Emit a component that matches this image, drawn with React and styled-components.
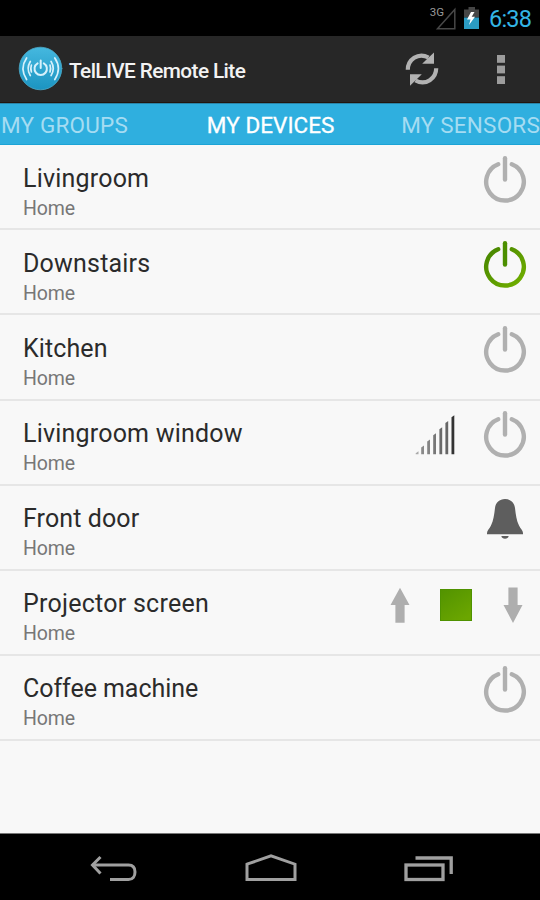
import React from 'react';
import styled, { createGlobalStyle } from 'styled-components';

const GlobalStyle = createGlobalStyle`
  * {
    box-sizing: border-box;
  }

  body {
    margin: 0;
    background: #000;
    font-family: Roboto, 'Liberation Sans', sans-serif;
  }

  svg {
    display: block;
    flex: none;
  }
`;

const Screen = styled.div`
  width: 540px;
  height: 900px;
  display: flex;
  flex-direction: column;
  overflow: hidden;
  background: #f8f8f8;
`;

const StatusBar = styled.div`
  height: 36px;
  flex: none;
  display: flex;
  justify-content: flex-end;
  align-items: center;
  padding-right: 8px;
  background: #000;
`;

const Clock = styled.span`
  width: 43px;
  margin-left: 9px;
  padding-top: 2px;
  color: #33b5e5;
  font-size: 23.5px;
  line-height: 34px;
  letter-spacing: -0.8px;
  white-space: nowrap;
`;

const ActionBar = styled.header`
  height: 67px;
  flex: none;
  display: flex;
  align-items: center;
  padding: 0 0 1px 18px;
  background: #272727;
  border-bottom: 1px solid #21160f;
`;

const Title = styled.h1`
  flex: 1;
  margin: 4px 0 0 6px;
  color: #f3f3f3;
  font-size: 20.8px;
  font-weight: 500;
  letter-spacing: -0.6px;
  white-space: nowrap;
`;

const IconButton = styled.button`
  width: ${({ $width }) => $width}px;
  height: 64px;
  padding: 0;
  display: flex;
  align-items: center;
  justify-content: center;
  background: none;
  border: 0;
`;

const Tabs = styled.nav`
  height: 42px;
  flex: none;
  display: flex;
  justify-content: space-between;
  align-items: center;
  padding: 1px 0 0 1px;
  background: #2fafdf;
  border-top: 1px solid #2a84a8;
  border-bottom: 1px solid #1ca4d6;
`;

const Tab = styled.span`
  padding-left: ${({ $active }) => ($active ? 12 : 0)}px;
  color: ${({ $active }) => ($active ? '#fff' : '#a5dcf2')};
  font-size: 22.5px;
  line-height: 38px;
  letter-spacing: ${({ $active }) => ($active ? 0.05 : 0.2)}px;
  -webkit-text-stroke: ${({ $active }) => ($active ? '0.3px #fff' : '0')};
  white-space: nowrap;
`;

const DeviceList = styled.ul`
  flex: 1;
  margin: 0;
  padding: 0.4px 0 0;
  list-style: none;
`;

const DeviceRow = styled.li`
  height: 85.05px;
  display: flex;
  justify-content: space-between;
  border-bottom: 2px solid #e6e6e6;
`;

const DeviceInfo = styled.div`
  padding: 17.4px 0 0 23px;
`;

const DeviceName = styled.div`
  color: #2b2b2b;
  font-size: 25px;
  line-height: 32px;
  letter-spacing: ${({ $spacing }) => $spacing}px;
  white-space: nowrap;
`;

const DeviceLocation = styled.div`
  color: #777;
  font-size: 19.5px;
  line-height: 28px;
  letter-spacing: -0.1px;
`;

const Actions = styled.div`
  display: flex;
  padding-top: 10px;
`;

const Slot = styled.div`
  width: ${({ $width }) => $width}px;
  height: 49px;
  display: flex;
  align-items: center;
  justify-content: center;
  padding: 0 0 ${({ $raise = 0 }) => $raise}px ${({ $shift = 0 }) => $shift}px;
`;

const NavBar = styled.footer`
  height: 67px;
  flex: none;
  display: flex;
  align-items: center;
  justify-content: center;
  gap: 107px;
  padding: 1px 0 0 3px;
  background: #000;
  border-top: 1px solid #777;
`;

const PowerIcon = ({ on }) => (
  <svg width="44" height="48" viewBox="0 0 44 48" fill="none">
    <defs>
      <linearGradient id="powerOn" x1="0" y1="0" x2="1" y2="1">
        <stop offset="0" stopColor="#468500" />
        <stop offset="1" stopColor="#72b000" />
      </linearGradient>
    </defs>
    <path
      d="M15.2 9.2A18.8 18.8 0 1 0 28.8 9.2"
      stroke={on ? 'url(#powerOn)' : '#b0b0b0'}
      strokeWidth="4.4"
      strokeLinecap="round"
    />
    <path d="M22 3.2V24.6" stroke={on ? '#4c8f00' : '#b0b0b0'} strokeWidth="4.4" strokeLinecap="round" />
  </svg>
);

const DimmerIcon = () => (
  <svg width="40" height="40" viewBox="0 0 40 40">
    {[
      [0.7, 36.8, '#aaa'],
      [6.2, 31, '#8a8a8a'],
      [12.2, 25, '#858585'],
      [18.2, 18.8, '#777'],
      [24.4, 12.7, '#6a6a6a'],
      [30.4, 6.5, '#666'],
      [36.5, 0.7, '#333'],
    ].map(([x, y, fill]) => (
      <path key={x} d={`M${x} ${y + 1.5}l2.8 -2V39.2h-2.8z`} fill={fill} />
    ))}
  </svg>
);

const BellIcon = () => (
  <svg width="38" height="40" viewBox="0 0 38 40" fill="#5e5e5e">
    <path d="M19 0C24.5 0 28.4 3.6 29 9C29.8 16 30.6 21.5 33 26.5C34.5 29.6 37 31.5 37 34V35.3H1V34C1 31.5 3.5 29.6 5 26.5C7.4 21.5 8.2 16 9 9C9.6 3.6 13.5 0 19 0Z" />
    <path d="M15.3 37H22.7C22.3 38.8 21 39.7 19 39.7S15.7 38.8 15.3 37Z" />
  </svg>
);

const ArrowIcon = ({ down }) => (
  <svg width="20" height="36" viewBox="0 0 20 36">
    <path d={down ? 'M5.4 0.6H14.6V18.1H19.5L10 36L0.5 18.1H5.4Z' : 'M10 0.8L19.5 18.1H14.6V35.8H5.4V18.1H0.5Z'} fill="#aeaeae" />
  </svg>
);

const StopIcon = () => (
  <svg width="32" height="32" viewBox="0 0 32 32">
    <defs>
      <linearGradient id="stopFill" x1="0" y1="0" x2="0.7" y2="1">
        <stop offset="0" stopColor="#529300" />
        <stop offset="1" stopColor="#6ba600" />
      </linearGradient>
    </defs>
    <rect x="0.5" y="0.5" width="31" height="31" fill="url(#stopFill)" stroke="#4f9200" />
  </svg>
);

const AppLogo = () => (
  <svg width="45" height="45" viewBox="0 0 45 45" fill="none" stroke="#d6f1fb" strokeWidth="1.7" strokeLinecap="round">
    <defs>
      <linearGradient id="logo" x1="0" y1="0" x2="0" y2="1">
        <stop offset="0" stopColor="#45b8df" />
        <stop offset="1" stopColor="#1b94c1" />
      </linearGradient>
    </defs>
    <circle cx="22.5" cy="22.5" r="21.3" fill="url(#logo)" stroke="#4da9c8" strokeWidth="0.8" />
    <path d="M19.6 17.4A6.2 6.2 0 1 0 25.8 17.4M22.7 14.5V22" strokeWidth="2" />
    <path d="M12.3 15.5Q8 22.5 12.3 29.5M8.6 12Q1.4 22.5 8.6 33.5" />
    <path d="M13.4 19Q12.2 22.5 13.4 26" />
    <path d="M33.1 15.5Q37.4 22.5 33.1 29.5M36.8 12Q44 22.5 36.8 33.5" />
    <path d="M32 19Q33.2 22.5 32 26" />
  </svg>
);

const RefreshIcon = () => (
  <svg width="34" height="36" viewBox="0 0 34 36" fill="none" stroke="#b2b2b2" strokeWidth="4.2">
    <path d="M2.8 18.8C2.8 9 13 0.8 23.5 6.5" />
    <path d="M31.2 17.2C31.2 27 21 35.2 10.5 29.5" />
    <path d="M29 1.5V12.8H17.2L21 9Z" fill="#b2b2b2" stroke="none" />
    <path d="M5 34.8V23.3H16.8L13 27Z" fill="#b2b2b2" stroke="none" />
  </svg>
);

const OverflowIcon = () => (
  <svg width="8" height="30" viewBox="0 0 8 30" fill="#9c9c9c">
    <rect y="1" width="8" height="7.8" />
    <rect y="11.6" width="8" height="7.8" />
    <rect y="22.2" width="8" height="7.8" />
  </svg>
);

const StatusIcons = () => (
  <svg width="52" height="36" viewBox="428 0 52 36">
    <path d="M437.5 28.8L454.8 9.5V28.8Z" fill="none" stroke="#484848" strokeWidth="1.5" />
    <text x="429.8" y="16" fontSize="11.5" fill="#999">3G</text>
    <path d="M464 9.5H468.5V7H475V9.5H479V17.5H464Z" fill="#464646" />
    <path d="M464 17.5H479V29H464Z" fill="#2b9bc2" />
    <path d="M471 12L467 19.5H470.5L469 25L475 16.8H471.7L474.5 12Z" fill="#fff" />
  </svg>
);

const BackIcon = () => (
  <svg width="48" height="30" viewBox="0 0 48 30" fill="none" stroke="#a0a0a0" strokeWidth="3">
    <path d="M2 12H38.5C43 12 45 15 45 19S43 26.5 38.5 26.5H20" />
    <path d="M10.5 4L2.5 12L10.5 20.5" />
  </svg>
);

const HomeIcon = () => (
  <svg width="52" height="30" viewBox="0 0 52 30" fill="none" stroke="#a0a0a0" strokeWidth="3">
    <path d="M2 11.2L26 2.8L50 11.2V26.5H2Z" />
  </svg>
);

const RecentIcon = () => (
  <svg width="50" height="30" viewBox="0 0 50 30" fill="none" stroke="#a0a0a0" strokeWidth="3.3">
    <rect x="2" y="12" width="37" height="14.5" />
    <path d="M11.5 5H47.2V21" />
  </svg>
);

const devices = [
  { name: 'Livingroom', type: 'switch' },
  { name: 'Downstairs', type: 'switch', on: true },
  { name: 'Kitchen', type: 'switch', spacing: 0.1 },
  { name: 'Livingroom window', type: 'dimmer' },
  { name: 'Front door', type: 'bell', spacing: 0.1 },
  { name: 'Projector screen', type: 'shutter', spacing: 0.25 },
  { name: 'Coffee machine', type: 'switch', spacing: -0.05 },
];

function DeviceActions({ type, on }) {
  if (type === 'shutter') {
    return (
      <Actions>
        <Slot $width={56}><ArrowIcon /></Slot>
        <Slot $width={56}><StopIcon /></Slot>
        <Slot $width={56} $shift={2}><ArrowIcon down /></Slot>
      </Actions>
    );
  }
  return (
    <Actions>
      {type === 'dimmer' && <Slot $width={70}><DimmerIcon /></Slot>}
      <Slot $width={70} $raise={2}>{type === 'bell' ? <BellIcon /> : <PowerIcon on={on} />}</Slot>
    </Actions>
  );
}

function App() {
  return (
    <Screen>
      <GlobalStyle />
      <StatusBar>
        <StatusIcons />
        <Clock>6:38</Clock>
      </StatusBar>
      <ActionBar>
        <AppLogo />
        <Title>TelLIVE Remote Lite</Title>
        <IconButton $width={78} aria-label="Refresh"><RefreshIcon /></IconButton>
        <IconButton $width={79} aria-label="More"><OverflowIcon /></IconButton>
      </ActionBar>
      <Tabs>
        <Tab>MY GROUPS</Tab>
        <Tab $active>MY DEVICES</Tab>
        <Tab>MY SENSORS</Tab>
      </Tabs>
      <DeviceList>
        {devices.map(({ name, type, on, spacing = 0.2 }) => (
          <DeviceRow key={name}>
            <DeviceInfo>
              <DeviceName $spacing={spacing}>{name}</DeviceName>
              <DeviceLocation>Home</DeviceLocation>
            </DeviceInfo>
            <DeviceActions type={type} on={on} />
          </DeviceRow>
        ))}
      </DeviceList>
      <NavBar>
        <BackIcon />
        <HomeIcon />
        <RecentIcon />
      </NavBar>
    </Screen>
  );
}

export default App;
